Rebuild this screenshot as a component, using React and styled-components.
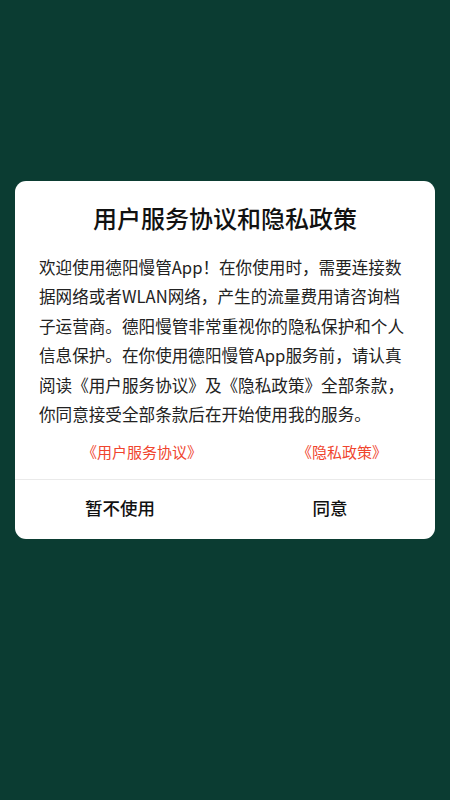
import React from "react";
import styled, { createGlobalStyle } from "styled-components";

const GlobalStyle = createGlobalStyle`
  html, body {
    margin: 0;
    padding: 0;
    background: #0b3c32;
  }
  body {
    font-family: "Noto Sans CJK SC", "Noto Sans", sans-serif;
  }
`;

const Page = styled.div`
  width: 450px;
  height: 800px;
  background: #0b3c32;
  display: flex;
  flex-direction: column;
  align-items: center;
  padding-top: 181px;
  box-sizing: border-box;
`;

const Card = styled.div`
  width: 420px;
  background: #ffffff;
  border-radius: 11px;
  display: flex;
  flex-direction: column;
  overflow: hidden;
`;

const Title = styled.h1`
  margin: 0;
  padding-top: 20px;
  font-size: 24px;
  line-height: 34px;
  font-weight: 500;
  color: #111;
  text-align: center;
`;

const Body = styled.div`
  padding: 18px 0 0 24px;
  font-size: 16.6px;
  line-height: 29.4px;
  color: #222;
`;

const Line = styled.div`
  white-space: nowrap;
`;

const Links = styled.div`
  display: flex;
  justify-content: space-between;
  padding: 13px 48px 0 67px;
  height: 37px;
`;

const LinkText = styled.span`
  font-size: 15px;
  line-height: 20px;
  color: #f0452e;
`;

const Divider = styled.div`
  height: 1px;
  background: #eaeaea;
`;

const Actions = styled.div`
  display: flex;
  height: 59px;
`;

const ActionButton = styled.button`
  flex: 1;
  border: none;
  background: transparent;
  font-family: inherit;
  font-size: 17.5px;
  font-weight: 500;
  color: #111;
  padding: 0 0 4px;
  cursor: pointer;
`;

const lines = [
  "欢迎使用德阳慢管App！在你使用时，需要连接数",
  "据网络或者WLAN网络，产生的流量费用请咨询档",
  "子运营商。德阳慢管非常重视你的隐私保护和个人",
  "信息保护。在你使用德阳慢管App服务前，请认真",
  "阅读《用户服务协议》及《隐私政策》全部条款，",
  "你同意接受全部条款后在开始使用我的服务。",
];

const App = () => {
  return (
    <>
      <GlobalStyle />
      <Page>
        <Card>
          <Title>用户服务协议和隐私政策</Title>
          <Body>
            {lines.map((l) => (
              <Line key={l}>{l}</Line>
            ))}
          </Body>
          <Links>
            <LinkText>《用户服务协议》</LinkText>
            <LinkText>《隐私政策》</LinkText>
          </Links>
          <Divider />
          <Actions>
            <ActionButton>暂不使用</ActionButton>
            <ActionButton>同意</ActionButton>
          </Actions>
        </Card>
      </Page>
    </>
  );
};

export default App;
